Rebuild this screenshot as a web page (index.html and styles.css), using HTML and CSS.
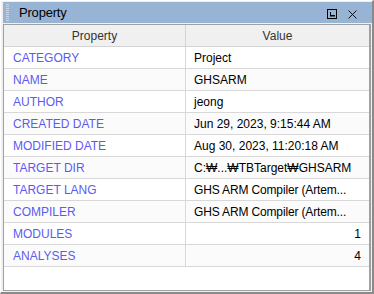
FILE: index.html
```html
<!DOCTYPE html>
<html>
<head>
<meta charset="utf-8">
<link rel="stylesheet" href="styles.css">
</head>
<body>
<div class="panel">
  <div class="titlebar">
    <div class="grip"></div>
    <div class="title">Property</div>
    <div class="tools">
      <svg class="icon" width="10" height="10" viewBox="0 0 10 10">
        <rect x="0.5" y="0.5" width="9" height="9" fill="none" stroke="#000" stroke-width="1"/>
        <rect x="3" y="3" width="1" height="4" fill="#000"/>
        <rect x="3" y="6" width="5" height="1.5" fill="#000"/>
      </svg>
      <svg class="icon" width="9" height="9" viewBox="0 0 9 9">
        <path d="M0.5 0.5 L8.5 8.5 M8.5 0.5 L0.5 8.5" stroke="#000" stroke-width="0.9" fill="none"/>
      </svg>
    </div>
  </div>
  <div class="frame">
    <table class="grid">
      <thead>
        <tr><th class="c1">Property</th><th class="c2">Value</th></tr>
      </thead>
      <tbody>
        <tr><td class="k">CATEGORY</td><td class="v">Project</td></tr>
        <tr class="alt"><td class="k">NAME</td><td class="v">GHSARM</td></tr>
        <tr><td class="k">AUTHOR</td><td class="v">jeong</td></tr>
        <tr class="alt"><td class="k">CREATED DATE</td><td class="v">Jun 29, 2023, 9:15:44 AM</td></tr>
        <tr><td class="k">MODIFIED DATE</td><td class="v">Aug 30, 2023, 11:20:18 AM</td></tr>
        <tr class="alt"><td class="k">TARGET DIR</td><td class="v">C:₩...₩TBTarget₩GHSARM</td></tr>
        <tr><td class="k">TARGET LANG</td><td class="v tight">GHS ARM Compiler (Artem...</td></tr>
        <tr class="alt"><td class="k">COMPILER</td><td class="v tight">GHS ARM Compiler (Artem...</td></tr>
        <tr><td class="k">MODULES</td><td class="v num">1</td></tr>
        <tr class="alt"><td class="k">ANALYSES</td><td class="v num">4</td></tr>
      </tbody>
    </table>
  </div>
</div>
</body>
</html>
```

FILE: styles.css
```css
html, body {
  margin: 0;
  padding: 0;
  background: #f0f0f0;
}
body {
  font-family: "Liberation Sans", Arial, sans-serif;
  font-size: 12px;
}
.panel {
  width: 374px;
  height: 294px;
  box-sizing: border-box;
  background: #f0f0f0;
  border-top: 1px solid #ffffff;
  border-left: 1px solid #ffffff;
  border-right: 2px solid #8a8a8a;
  border-bottom: 2px solid #8a8a8a;
  padding: 1px 0 1px 2px;
  display: flex;
  flex-direction: column;
}
.titlebar {
  height: 21px;
  background: #98b4d4;
  display: flex;
  align-items: center;
  flex: none;
}
.grip {
  width: 3px;
  height: 17px;
  margin-left: 3px;
  background: repeating-linear-gradient(to bottom, #c8d6e8 0 1px, transparent 1px 2px);
  flex: none;
}
.title {
  margin-left: 10px;
  font-family: "Liberation Sans", Arial, sans-serif;
  font-size: 13px;
  letter-spacing: -0.2px;
  color: #000;
  flex: 1;
}
.tools {
  display: flex;
  align-items: center;
  gap: 11px;
  margin-right: 15px;
  padding-top: 3px;
}
.icon {
  display: block;
}
.frame {
  flex: 1;
  margin-top: 1px;
  margin-right: 1px;
  background: #ffffff;
  border: 1px solid #a0a0a0;
  border-right: 2px solid #a0a0a0;
  overflow: hidden;
}
.grid {
  border-collapse: collapse;
  width: 100%;
  table-layout: fixed;
}
.grid th {
  height: 21px;
  background: #f0f0f0;
  font-weight: normal;
  color: #333333;
  text-align: center;
  border-bottom: 1px solid #d4d4d4;
  padding: 0;
}
.grid th.c1 {
  width: 181px;
  border-right: 1px solid #d4d4d4;
}
.grid td {
  height: 21px;
  padding: 0 9px;
  border-bottom: 1px solid #d8d8d8;
  white-space: nowrap;
  overflow: hidden;
}
.grid tr.alt td {
  background: #fbfbfb;
}
.grid td.k {
  color: #5b5bef;
  border-right: 1px solid #d8d8d8;
}
.grid td.v {
  color: #000;
  padding-left: 8px;
  padding-right: 2px;
}
.grid td.tight {
  letter-spacing: -0.15px;
}
.grid td.num {
  text-align: right;
  padding-right: 8px;
}
```
